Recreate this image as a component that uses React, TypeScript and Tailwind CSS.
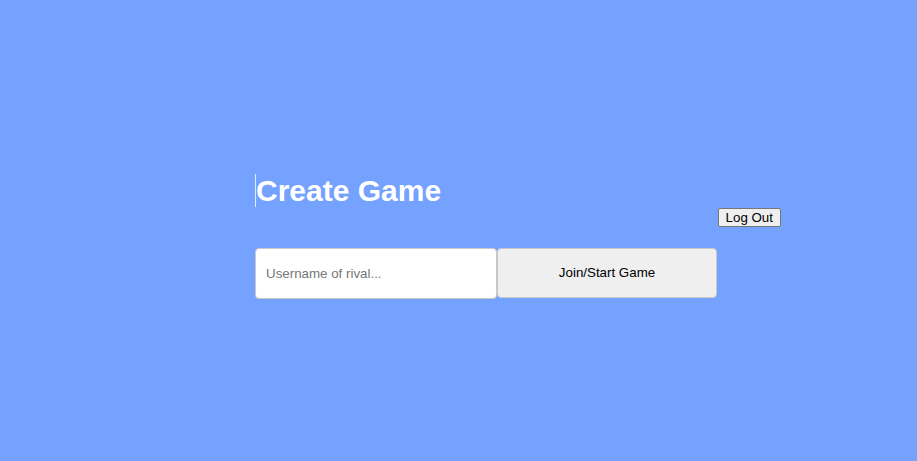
import React, { useState } from 'react';

function App() {
  const [rival, setRival] = useState('');

  return (
    <div className="min-h-[461px] w-full bg-[#75a1ff] font-['Liberation_Sans',Arial,sans-serif]">
      <div className="w-[781px] pl-[255px] pt-[174px]">
        <h1 className="border-l border-white/80 text-[30px] font-bold leading-[33px] text-white">
          Create Game
        </h1>

        <div className="mt-[1px] flex justify-end">
          <button className="h-[19px] rounded-[2px] border border-[#767676] bg-[#efefef] px-[7px] text-[13.33px] leading-none text-black">
            Log Out
          </button>
        </div>

        <div className="mt-[21px] flex items-start">
          <input
            value={rival}
            onChange={e => setRival(e.target.value)}
            placeholder="Username of rival..."
            className="h-[51px] w-[242px] rounded border border-[#c8c8c8] bg-white px-[10px] text-[13.33px] text-black outline-none placeholder:text-[#767676]"
          />
          <button className="h-[50px] w-[220px] rounded border border-[#c8c8c8] bg-[#efefef] text-[13.33px] text-black">
            Join/Start Game
          </button>
        </div>
      </div>
    </div>
  );
}

export default App;
